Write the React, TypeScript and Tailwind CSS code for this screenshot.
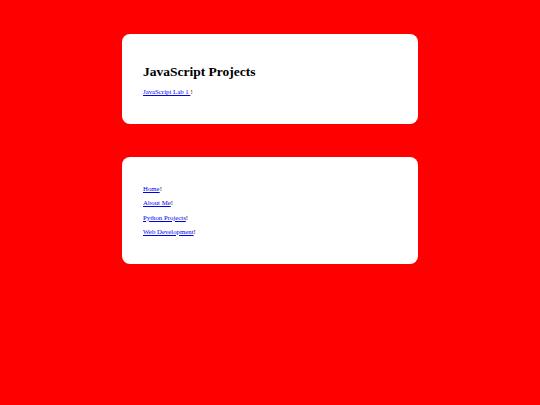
import React from 'react';

const navLinks = ['Home', 'About Me', 'Python Projects', 'Web Development'];

export default function App() {
  return (
    <div className="min-h-[405px] bg-[#ff0000] pt-[34px] font-['Liberation_Serif',serif] text-black">
      {/* Header card */}
      <div className="mx-auto h-[90px] w-[296px] rounded-lg bg-white px-[21px] pt-[30px]">
        <h1 className="text-[13.5px] font-bold leading-[16px]">JavaScript Projects</h1>
        <p className="mt-[7px] text-[6.8px] leading-[9px]">
          <a href="#" className="text-[#0000ee] underline">JavaScript Lab 1 </a>!
        </p>
      </div>

      {/* Nav card */}
      <div className="mx-auto mt-[33px] h-[107px] w-[296px] rounded-lg bg-white px-[21px] pt-[27px]">
        <ul className="flex flex-col gap-[5.3px] text-[6.8px] leading-[9px]">
          {navLinks.map((link) => (
            <li key={link}>
              <a href="#" className="text-[#0000ee] underline">{link}</a>!
            </li>
          ))}
        </ul>
      </div>
    </div>
  );
}
